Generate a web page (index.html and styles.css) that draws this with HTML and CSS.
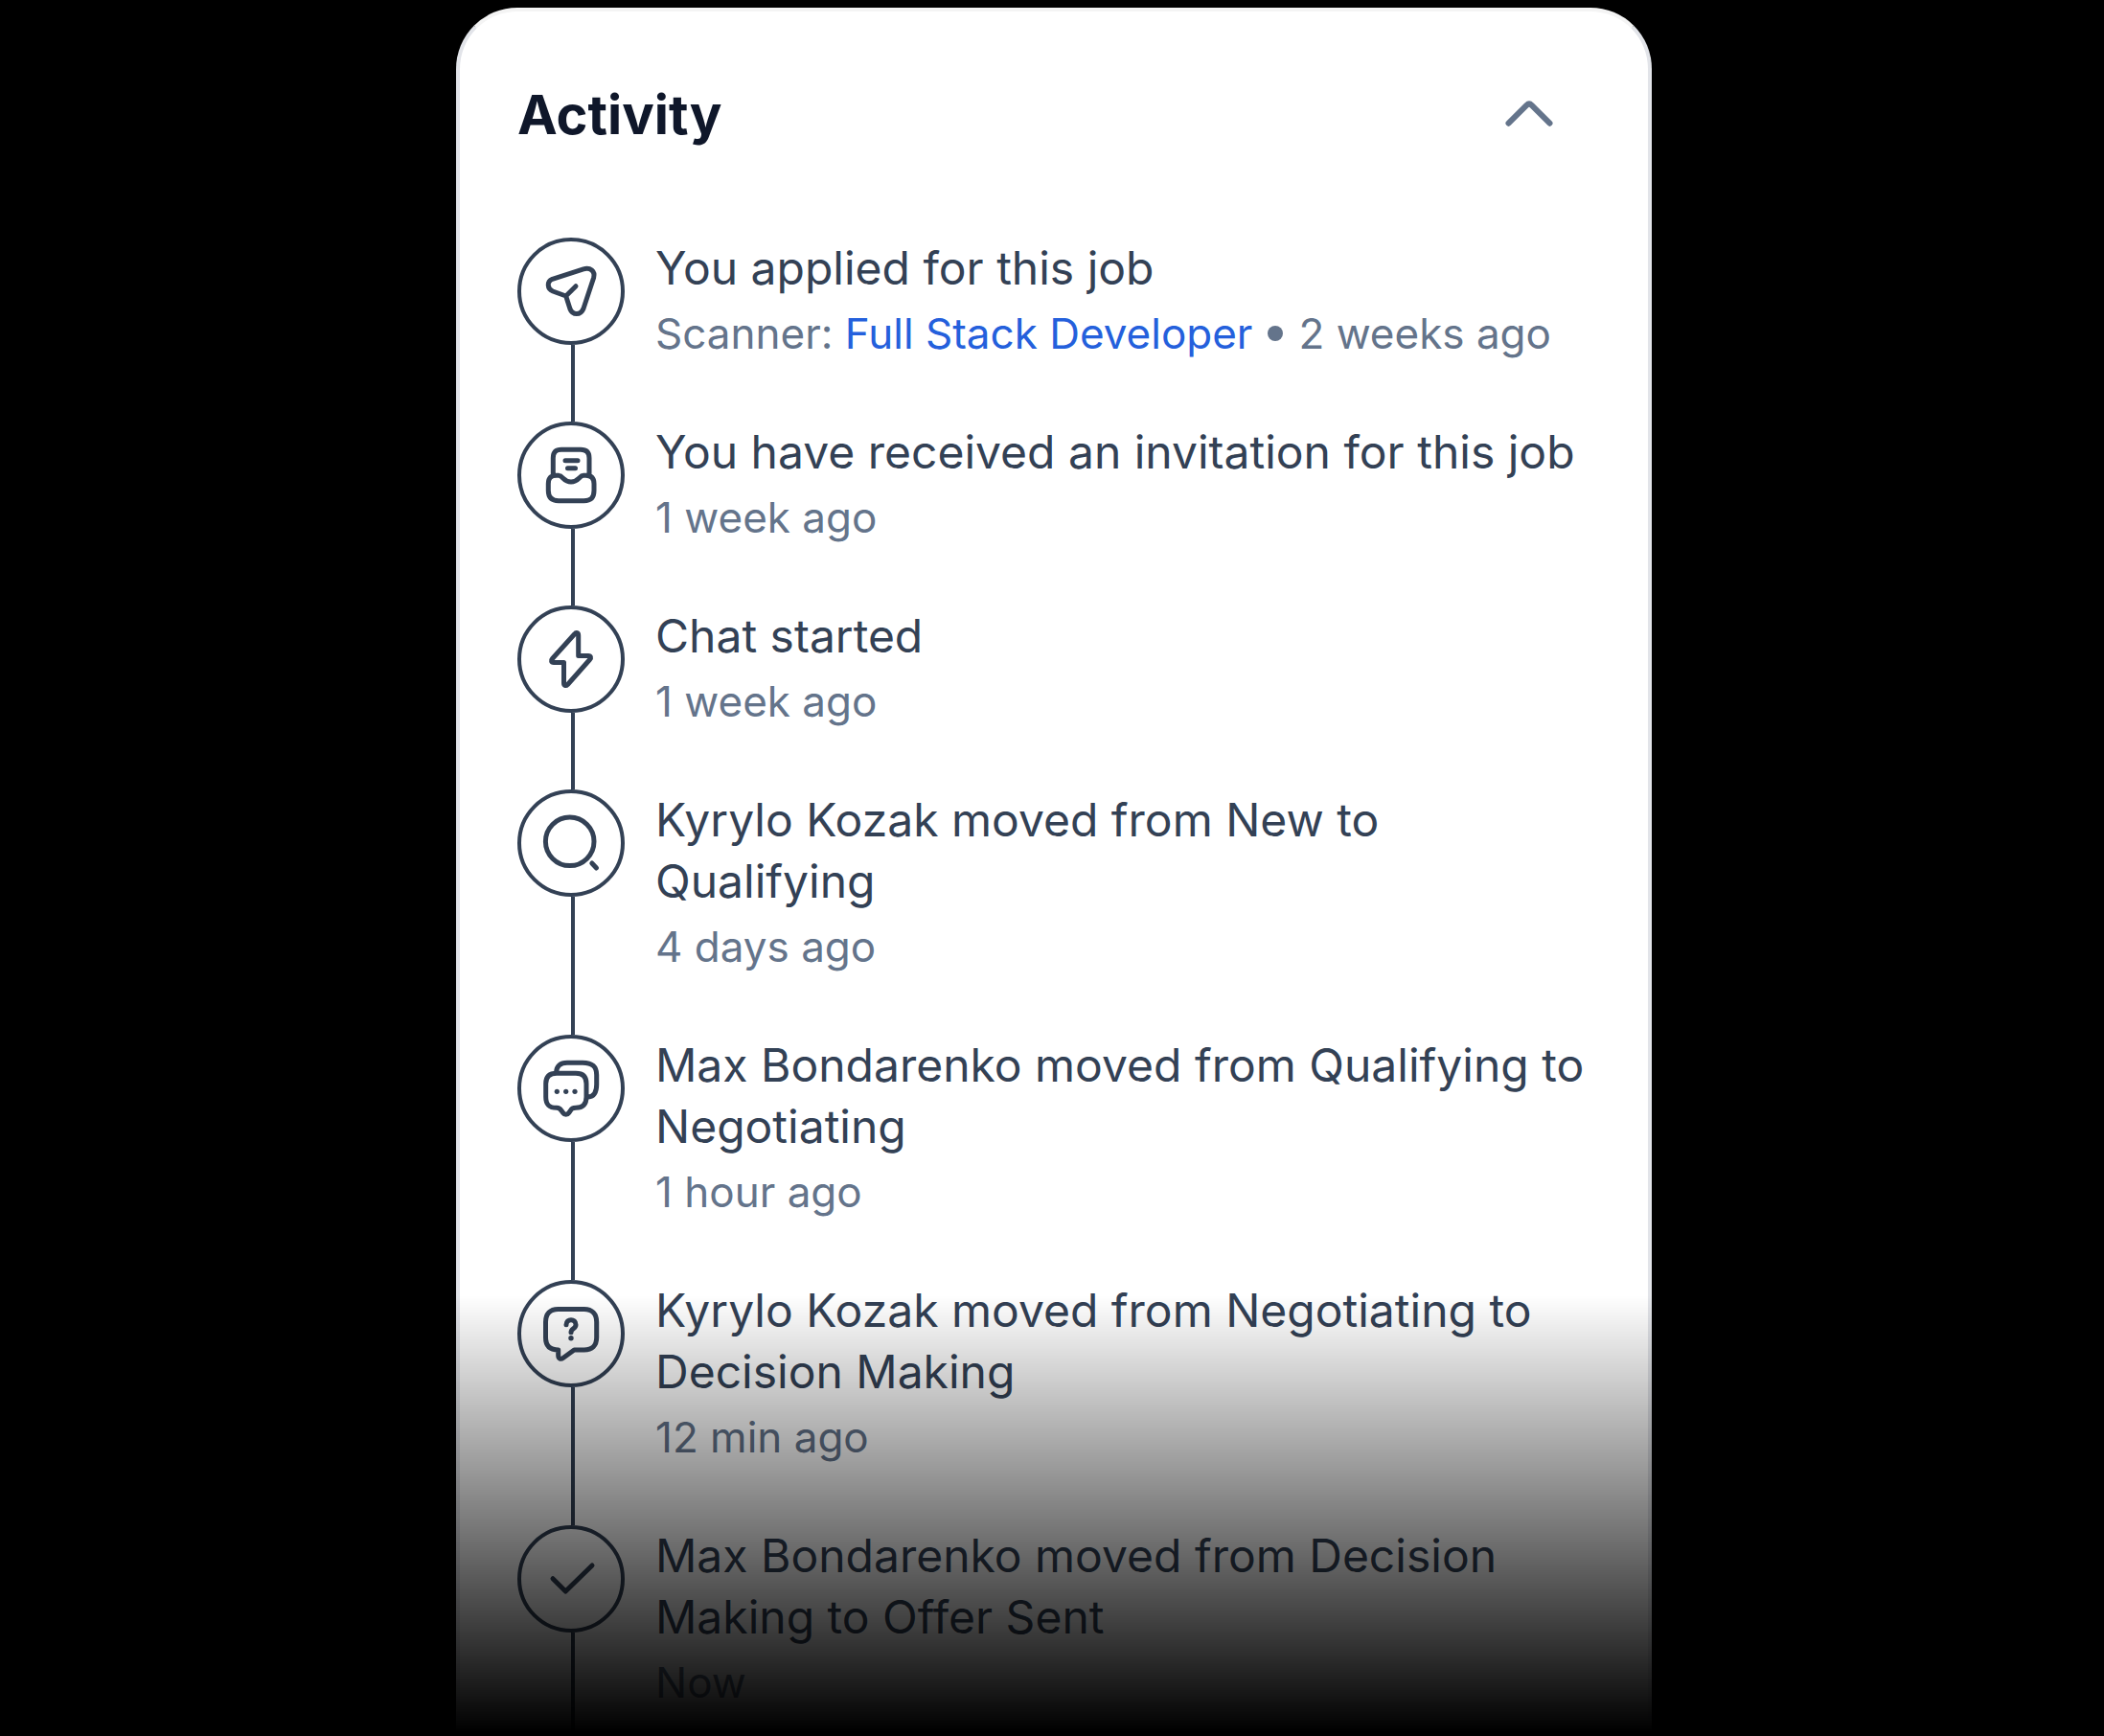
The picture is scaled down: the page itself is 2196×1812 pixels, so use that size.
FILE: index.html
```html
<!DOCTYPE html>
<html lang="en">
<head>
    <meta charset="UTF-8">
    <meta name="viewport" content="width=device-width, initial-scale=1.0">
    <title>Activity</title>
    <link rel="stylesheet" href="styles.css">
</head>
<body>
    <section class="card">
        <header class="card-header">
            <h2>Activity</h2>
            <button type="button" class="toggle" aria-label="Collapse activity" aria-expanded="true">
                <svg class="icon" viewBox="0 0 64 64"><path d="M10.5 40.7 L29.3 21.9 Q32 19.2 34.7 21.9 L53.5 40.7"/></svg>
            </button>
        </header>

        <ol class="timeline">
            <li>
                <div class="rail">
                    <span class="circle">
                        <svg class="icon" viewBox="0 0 64 64"><path d="M26.7 37 L13 32 C7 29.5 6.5 22 12.5 19.3 L45 8.8 C52 6.8 57.5 11 55.6 18 L45 50 C42 57.5 33.5 57 31 50.5 Z M26.7 37 L37 26.7"/></svg>
                    </span>
                </div>
                <div class="content">
                    <p class="title">You applied for this job</p>
                    <div class="meta"><span>Scanner: <a href="#">Full Stack Developer</a></span><span class="dot"></span><span>2 weeks ago</span></div>
                </div>
            </li>
            <li>
                <div class="rail">
                    <span class="circle">
                        <svg class="icon" viewBox="0 0 64 64"><path d="M13.3 32 V14 C13.3 8 16 5.3 22 5.3 H42 C48 5.3 51 8 51 14 V32 M26 16.7 H39 M28.5 24.7 H36.5 M19 32.3 H17 C10.5 32.3 8.3 35.5 8.3 41 V48 C8.3 55.5 12 58.7 19 58.7 H45.5 C52.5 58.7 56 55.5 56 48 V41 C56 35.5 53.5 32.3 47.5 32.3 H45 C40.5 32.3 40 39 32 39 C24 39 23.5 32.3 19 32.3"/></svg>
                    </span>
                </div>
                <div class="content">
                    <p class="title">You have received an invitation for this job</p>
                    <div class="meta">1 week ago</div>
                </div>
            </li>
            <li>
                <div class="rail">
                    <span class="circle">
                        <svg class="icon" viewBox="0 0 64 64"><path d="M35.5 6 C37.5 3.5 39.7 4.5 39.7 7.5 V28.5 H50 C52.7 28.5 53.3 30.5 51.5 32.5 L28.5 58.5 C26.5 60.5 24.5 59.5 24.5 57 V35.5 H14 C11.3 35.5 10.7 33.5 12.5 31.5 Z"/></svg>
                    </span>
                </div>
                <div class="content">
                    <p class="title">Chat started</p>
                    <div class="meta">1 week ago</div>
                </div>
            </li>
            <li>
                <div class="rail">
                    <span class="circle">
                        <svg class="icon" viewBox="0 0 64 64"><circle cx="30.7" cy="30.3" r="25.3"/><path d="M53.8 53 L58.5 58"/></svg>
                    </span>
                </div>
                <div class="content">
                    <p class="title">Kyrylo Kozak moved from New to Qualifying</p>
                    <div class="meta">4 days ago</div>
                </div>
            </li>
            <li>
                <div class="rail">
                    <span class="circle">
                        <svg class="icon" viewBox="0 0 64 64"><path d="M16.5 15.5 C17 8.5 20.5 5.3 28 5.3 H44 C54.5 5.3 58.7 9.5 58.7 18 V28 C58.7 36.5 56 40.5 50 41 M17 16.3 H37 C44.5 16.3 48 20 48 27 V41 C48 48.5 44.5 52.3 37 52.3 C33.5 52.3 32.5 53 31.3 55.3 L29.8 57.5 C28.2 59.8 25.2 59.8 23.6 57.5 L22 55.3 C20.5 53 19.5 52.3 17 52.3 C9 52.3 5.7 49 5.7 41 V27 C5.7 20 9.5 16.3 17 16.3 Z"/><g class="solid"><circle cx="17.3" cy="35.3" r="2.6"/><circle cx="26.7" cy="35.3" r="2.6"/><circle cx="36" cy="35.3" r="2.6"/></g></svg>
                    </span>
                </div>
                <div class="content">
                    <p class="title">Max Bondarenko moved from Qualifying to Negotiating</p>
                    <div class="meta">1 hour ago</div>
                </div>
            </li>
            <li>
                <div class="rail">
                    <span class="circle">
                        <svg class="icon" viewBox="0 0 64 64"><path d="M35.3 49 H45.7 C54 49 58.7 44.5 58.7 36 V20 C58.7 11.5 54 6.5 45.7 6.5 H18.5 C10 6.5 5.5 11.5 5.5 20 V36 C5.5 44.5 10 49 18.7 49 V54.5 C18.7 58 21 59.3 24 57.2 Z M27 22.7 C27 16 37 16 37 22.7 C37 27 32 26.5 32 30.8"/><circle class="solid" cx="32" cy="36.7" r="2.7"/></svg>
                    </span>
                </div>
                <div class="content">
                    <p class="title">Kyrylo Kozak moved from Negotiating to Decision Making</p>
                    <div class="meta">12 min ago</div>
                </div>
            </li>
            <li>
                <div class="rail">
                    <span class="circle">
                        <svg class="icon" viewBox="0 0 64 64"><path d="M13 31.7 L26.3 45 L54 18"/></svg>
                    </span>
                </div>
                <div class="content">
                    <p class="title">Max Bondarenko moved from Decision Making to Offer Sent</p>
                    <div class="meta">Now</div>
                </div>
            </li>
        </ol>
    </section>
    <div class="fade"></div>
</body>
</html>
```
FILE: styles.css
```css
* {
    box-sizing: border-box;
}

body {
    background-color: #000;
    margin: 0;
    padding: 8px 0 0 4px;
    height: 100vh;
    overflow: hidden;
    font-family: Inter, Arial, sans-serif;
    color: #334155;
}

.card {
    max-width: 1248px;
    margin: 0 auto;
    padding: 60px;
    background-color: #fff;
    border: 4px solid #e2e4e9;
    border-top-color: #f4f4f4;
    border-radius: 64px;
}

.card-header {
    display: flex;
    justify-content: space-between;
    align-items: center;
    margin-bottom: 80px;
}

.card-header h2 {
    margin: 0;
    font-size: 56px;
    line-height: 96px;
    font-weight: 700;
    color: #0f172a;
}

.toggle {
    display: flex;
    padding: 0 32px;
    border: 0;
    background: none;
    color: #64748b;
    cursor: pointer;
}

.icon {
    width: 64px;
    height: 64px;
    fill: none;
    stroke: currentColor;
    stroke-width: 5;
    stroke-linecap: round;
    stroke-linejoin: round;
}

.toggle .icon {
    stroke-width: 6;
}

.icon .solid {
    fill: currentColor;
    stroke: none;
}

.timeline {
    list-style: none;
    margin: 0;
    padding: 0;
}

.timeline li {
    display: flex;
    gap: 32px;
}

/* Circle on top, connector line fills the rest of the row */
.rail {
    display: flex;
    flex-direction: column;
    flex-shrink: 0;
}

.rail::after {
    content: "";
    flex: 1;
    width: 4px;
    margin-left: 50%;
    background-color: #334155;
}

.circle {
    display: flex;
    justify-content: center;
    align-items: center;
    width: 112px;
    height: 112px;
    border: 4px solid #334155;
    border-radius: 50%;
}

.content {
    flex: 1;
    padding-bottom: 64px;
}

.title {
    margin: 0 0 8px;
    font-size: 48px;
    line-height: 64px;
}

.meta {
    display: flex;
    align-items: center;
    gap: 16px;
    font-size: 44px;
    line-height: 56px;
    color: #64748b;
}

.meta a {
    color: #2460dc;
    text-decoration: none;
}

.dot {
    width: 16px;
    height: 16px;
    border-radius: 50%;
    background-color: #64748b;
}

/* Fades the list out towards the bottom of the window */
.fade {
    position: fixed;
    left: 0;
    right: 0;
    bottom: 0;
    height: 460px;
    background: linear-gradient(to top, #000 4px, transparent);
    pointer-events: none;
}
```
